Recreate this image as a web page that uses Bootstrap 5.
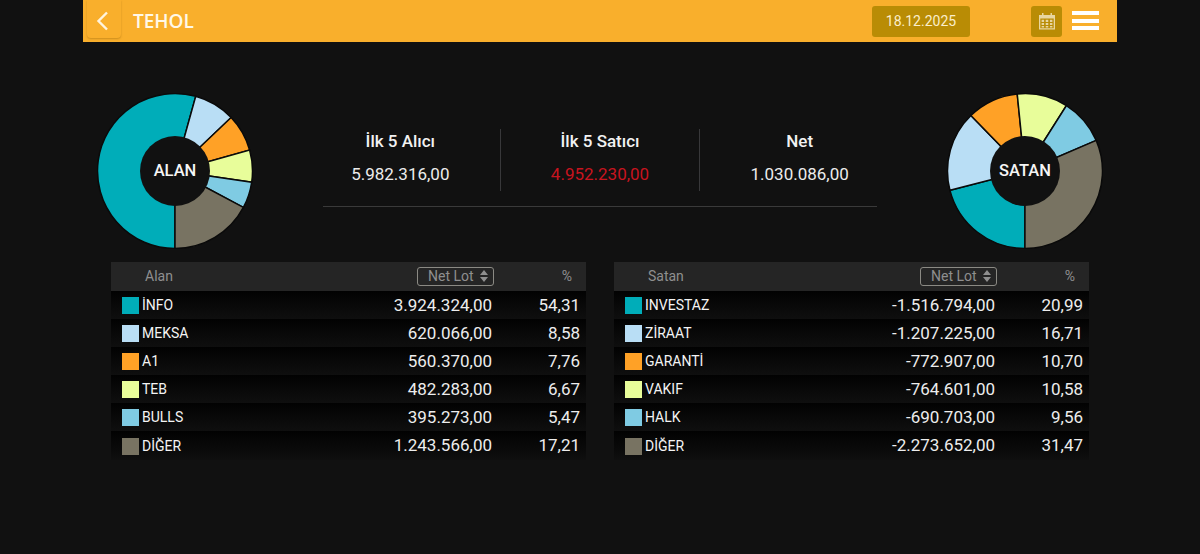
<!DOCTYPE html>
<html lang="en">
<head>
    <meta charset="UTF-8">
    <meta name="viewport" content="width=device-width, initial-scale=1.0">
    <title>TEHOL</title>
    <link href="https://cdn.jsdelivr.net/npm/bootstrap@5.3.0/dist/css/bootstrap.min.css" rel="stylesheet">
    <style>
        html, body { height: 100%; }
        body { background: #111111; color: #fff; font-family: Roboto, "Liberation Sans", sans-serif; overflow: hidden; }
        .page-wrap { width: 1034px; margin-left: 83px; }
        .top-bar { height: 42px; background: #f9af2c; padding: 0 18px 0 4px; }
        .back-btn { width: 34px; height: 38px; padding: 4px 3px 0 0; background: #f9af2c; border-radius: 0 0 4px 4px; box-shadow: 0 1px 2px rgba(120, 80, 0, .35); }
        .stock-title { font-family: "Open Sans", sans-serif; font-weight: 600; font-size: 19px; color: #fff8e8; margin-left: 12px; }
        .date-box { width: 98px; height: 31px; background: #b98c05; color: #fbeecb; border-radius: 3px; font-size: 14px; margin-right: 61px; }
        .cal-box { width: 31px; height: 31px; background: #b98c05; border-radius: 3px; margin-right: 10px; }
        .burger { width: 27px; gap: 3.6px; margin-top: -1px; }
        .burger span { height: 4px; background: #fff; display: block; }
        .summary-row { padding: 51px 14px 0; height: 220px; }
        .donut-box { width: 156px; height: 156px; position: relative; flex: none; }
        .donut-label { position: absolute; inset: 0; font-size: 16.5px; font-weight: 500; color: #f6f6f6; }
        .stats-box { width: 598px; margin-top: 36px; }
        .stat-col { flex: 1 1 0; height: 62px; padding-top: 3px; }
        .stat-col + .stat-col { border-left: 1px solid #38383a; }
        .stat-title { font-size: 17px; font-weight: 500; line-height: 19px; margin-bottom: 14px; color: #f2f2f2; }
        .stat-value { font-size: 17px; line-height: 19px; color: #ececec; }
        .stat-red { color: #c8141f; }
        .stats-line { height: 1px; background: #3a3a3a; margin: 15px 22px 0; }
        .tables-row { padding: 0 28px; gap: 28px; }
        .lot-table { width: 475px; table-layout: fixed; margin: 0; --bs-table-bg: transparent; --bs-table-color: #fff; }
        .lot-table > thead > tr > th { height: 29px; padding: 0; background: #252525; color: #8f8f8f; font-weight: 400; font-size: 14px; vertical-align: middle; border: 0; }
        .lot-table > tbody > tr > td { height: 28px; padding: 1px 0 0; font-size: 17px; color: #ededed; vertical-align: middle; background: linear-gradient(#020202, #0f0f0f); border: 0; }
        .lot-table > tbody > tr:last-child > td { height: 29px; }
        .name-col { width: 250px; }
        .lot-col { width: 133px; }
        .pct-col { width: 92px; }
        .lot-table .head-name { padding-left: 34px; }
        .lot-table .head-pct { padding-right: 14px; }
        .lot-table > tbody > tr > .cell-lot { padding-right: 2px; }
        .sort-btn { display: inline-flex; align-items: center; gap: 6px; height: 19px; width: 77px; padding: 0 0 0 10px; border: 1px solid #8b8a84; border-radius: 3px; background: transparent; color: #8f8f8f; font-size: 14px; line-height: 1; }
        .swatch { width: 17px; height: 17px; margin: 0 3px 0 11px; flex: none; }
        .firm { font-size: 14px; color: #f4f4f4; }
        .lot-table > tbody > tr > .cell-pct { padding-right: 6px; }
    </style>
</head>
<body>
    <div class="page-wrap">
        <div class="top-bar d-flex align-items-center">
            <div class="back-btn d-flex align-items-center justify-content-center align-self-start">
                <svg width="13" height="20" viewBox="0 0 13 20" fill="none" stroke="#fff4de" stroke-width="2.4"><path d="M11 1.500 2.500 10 11 18.500"/></svg>
            </div>
            <span class="stock-title">TEHOL</span>
            <div class="date-box d-flex align-items-center justify-content-center ms-auto">18.12.2025</div>
            <div class="cal-box d-flex align-items-center justify-content-center">
                <svg width="18" height="18" viewBox="0 0 18 18">
                    <path fill="#e8d6a0" d="M1 3h3V1h1.500v2h7V1H14v2h3v14.500H1zM2.300 6.500v9.700h13.400V6.500z"/>
                    <path fill="#e8d6a0" d="M3.600 7.800h2.500v2.200H3.600zM7.700 7.800h2.600v2.200H7.700zM11.900 7.800h2.500v2.200h-2.500zM3.600 11h2.500v2H3.600zM7.700 11h2.600v2H7.700zM11.900 11h2.500v2h-2.500zM3.600 14h2.500v1.400H3.600zM7.700 14h2.600v1.400H7.700zM11.900 14h2.500v1.400h-2.500z"/>
                </svg>
            </div>
            <div class="burger d-flex flex-column"><span></span><span></span><span></span></div>
        </div>

        <div class="summary-row d-flex justify-content-between align-items-start">
            <div class="donut-box">
                <svg id="donut-alan" width="156" height="156" viewBox="0 0 156 156"></svg>
                <div class="donut-label d-flex align-items-center justify-content-center">ALAN</div>
            </div>
            <div class="stats-box">
                <div class="d-flex text-center">
                    <div class="stat-col"><div class="stat-title">İlk 5 Alıcı</div><div class="stat-value">5.982.316,00</div></div>
                    <div class="stat-col"><div class="stat-title">İlk 5 Satıcı</div><div class="stat-value stat-red">4.952.230,00</div></div>
                    <div class="stat-col"><div class="stat-title">Net</div><div class="stat-value">1.030.086,00</div></div>
                </div>
                <div class="stats-line"></div>
            </div>
            <div class="donut-box">
                <svg id="donut-satan" width="156" height="156" viewBox="0 0 156 156"></svg>
                <div class="donut-label d-flex align-items-center justify-content-center">SATAN</div>
            </div>
        </div>

        <div class="tables-row d-flex">
            <table class="table lot-table">
                <thead><tr>
                    <th class="name-col head-name">Alan</th>
                    <th class="text-end lot-col"><button class="sort-btn" type="button">Net Lot <svg width="8" height="12" viewBox="0 0 8 12" fill="#8f8f8f"><path d="M4 0 8 5H0zM4 12 0 7h8z"/></svg></button></th>
                    <th class="text-end head-pct pct-col">%</th>
                </tr></thead>
                <tbody id="table-alan"></tbody>
            </table>
            <table class="table lot-table">
                <thead><tr>
                    <th class="name-col head-name">Satan</th>
                    <th class="text-end lot-col"><button class="sort-btn" type="button">Net Lot <svg width="8" height="12" viewBox="0 0 8 12" fill="#8f8f8f"><path d="M4 0 8 5H0zM4 12 0 7h8z"/></svg></button></th>
                    <th class="text-end head-pct pct-col">%</th>
                </tr></thead>
                <tbody id="table-satan"></tbody>
            </table>
        </div>
    </div>

    <script>
        const colors = ["#00adb9", "#b9def5", "#ffa126", "#e8fd9a", "#7fcbe3", "#787362"];

        const alan = [
            ["İNFO", "3.924.324,00", "54,31"],
            ["MEKSA", "620.066,00", "8,58"],
            ["A1", "560.370,00", "7,76"],
            ["TEB", "482.283,00", "6,67"],
            ["BULLS", "395.273,00", "5,47"],
            ["DİĞER", "1.243.566,00", "17,21"]
        ];
        const satan = [
            ["INVESTAZ", "-1.516.794,00", "20,99"],
            ["ZİRAAT", "-1.207.225,00", "16,71"],
            ["GARANTİ", "-772.907,00", "10,70"],
            ["VAKIF", "-764.601,00", "10,58"],
            ["HALK", "-690.703,00", "9,56"],
            ["DİĞER", "-2.273.652,00", "31,47"]
        ];

        function fillTable(id, rows) {
            document.getElementById(id).innerHTML = rows.map((row, i) => `
                <tr>
                    <td><div class="d-flex align-items-center"><span class="swatch" style="background:${colors[i]}"></span><span class="firm">${row[0]}</span></div></td>
                    <td class="text-end cell-lot">${row[1]}</td>
                    <td class="text-end cell-pct">${row[2]}</td>
                </tr>`).join("");
        }

        // slices start at 6 o'clock and go clockwise
        function drawDonut(id, rows) {
            const cx = 78, cy = 78, r = 77.5, inner = 35;
            let angle = 180, html = "";
            rows.forEach((row, i) => {
                const sweep = parseFloat(row[2].replace(",", ".")) * 3.6;
                const a0 = angle * Math.PI / 180, a1 = (angle + sweep) * Math.PI / 180;
                const x0 = cx + r * Math.sin(a0), y0 = cy - r * Math.cos(a0);
                const x1 = cx + r * Math.sin(a1), y1 = cy - r * Math.cos(a1);
                const large = sweep > 180 ? 1 : 0;
                html += `<path d="M${cx} ${cy}L${x0} ${y0}A${r} ${r} 0 ${large} 1 ${x1} ${y1}Z" fill="${colors[i]}" stroke="#0a0a0a" stroke-width="1.5"/>`;
                angle += sweep;
            });
            html += `<circle cx="${cx}" cy="${cy}" r="${inner}" fill="#111111"/>`;
            document.getElementById(id).innerHTML = html;
        }

        fillTable("table-alan", alan);
        fillTable("table-satan", satan);
        drawDonut("donut-alan", alan);
        drawDonut("donut-satan", satan);
    </script>
    <script src="https://cdn.jsdelivr.net/npm/bootstrap@5.3.0/dist/js/bootstrap.bundle.min.js"></script>
</body>
</html>
